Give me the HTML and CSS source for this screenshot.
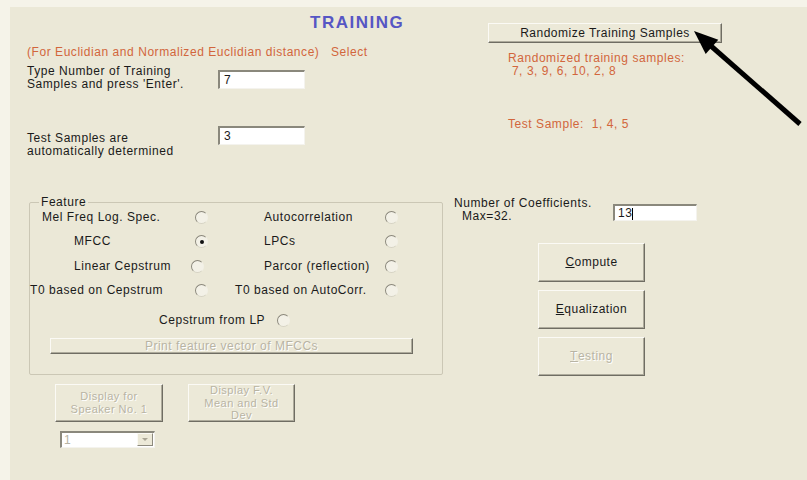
FILE: index.html
```html
<!DOCTYPE html>
<html>
<head>
<meta charset="utf-8">
<title>Training</title>
<link rel="stylesheet" href="styles.css">
</head>
<body>
<div class="dialog">
  <div class="head">
    <div class="intro">
      <h1 class="title">TRAINING</h1>
      <p class="note">(For Euclidian and Normalized Euclidian distance)&nbsp;&nbsp; Select</p>
      <div class="field field-train">
        <label class="field-label">Type Number of Training<br>Samples and press 'Enter'.</label>
        <div class="textbox textbox-train">7</div>
      </div>
      <div class="field field-test">
        <label class="field-label field-label-test">Test Samples are<br>automatically determined</label>
        <div class="textbox">3</div>
      </div>
    </div>
    <div class="randomize">
      <button class="btn btn-random">Randomize Training Samples</button>
      <p class="result">Randomized training samples:<br>&nbsp;7, 3, 9, 6, 10, 2, 8</p>
      <p class="result result-test">Test Sample:&nbsp; 1, 4, 5</p>
    </div>
  </div>

  <div class="main">
    <div class="left">
      <fieldset class="feature">
        <legend>Feature</legend>
        <div class="options">
          <span class="opt opt-mel">Mel Freq Log. Spec.</span><span class="radio"></span><span></span><span class="opt opt-r">Autocorrelation</span><span class="radio"></span>
          <span class="opt opt-in">MFCC</span><span class="radio radio-on"></span><span></span><span class="opt opt-r">LPCs</span><span class="radio"></span>
          <span class="opt opt-in">Linear Cepstrum</span><span class="radio radio-shift"></span><span></span><span class="opt opt-r">Parcor (reflection)</span><span class="radio"></span>
          <span class="opt">T0 based on Cepstrum</span><span class="radio"></span><span></span><span class="opt">T0 based on AutoCorr.</span><span class="radio"></span>
        </div>
        <div class="lp-row"><span>Cepstrum from LP</span><span class="radio"></span></div>
        <button class="btn btn-print" disabled>Print feature vector of MFCCs</button>
      </fieldset>
      <div class="display-row">
        <button class="btn btn-display" disabled>Display for<br>Speaker No. 1</button>
        <button class="btn btn-display btn-stats" disabled>Display F.V.<br>Mean and Std<br>Dev</button>
      </div>
      <div class="combo"><span class="combo-value">1</span><span class="combo-arrow"></span></div>
    </div>

    <div class="right">
      <div class="coef">
        <label class="coef-label">Number of Coefficients.<br><span class="coef-max">Max=32.</span></label>
        <div class="textbox textbox-coef">13<span class="caret"></span></div>
      </div>
      <div class="actions">
        <button class="btn btn-action"><u>C</u>ompute</button>
        <button class="btn btn-action"><u>E</u>qualization</button>
        <button class="btn btn-action" disabled><u>T</u>esting</button>
      </div>
    </div>
  </div>
</div>

<svg class="pointer" width="807" height="480" viewBox="0 0 807 480">
  <line x1="800" y1="124" x2="711" y2="46" stroke="#000" stroke-width="5"/>
  <polygon points="694,31 705.7,53.9 718.3,39.7" fill="#000"/>
</svg>
</body>
</html>
```

FILE: styles.css
```css
* { box-sizing: border-box; }

html, body {
  margin: 0;
  width: 807px;
  height: 480px;
  overflow: hidden;
}

body {
  position: relative;
  padding: 7px 0 0 10px;
  background: #f5f3e9;
  font-family: "Liberation Sans", Arial, sans-serif;
  font-size: 12px;
  line-height: 13px;
  letter-spacing: 0.55px;
  color: #1a1a1a;
}

.dialog {
  height: 473px;
  background: #ebe8d7;
  display: flex;
  flex-direction: column;
}

p, h1 { margin: 0; }

/* ---------- header area ---------- */
.head {
  display: flex;
  height: 188px;
  flex: none;
}

.intro {
  width: 478px;
  padding-left: 17px;
}

.title {
  margin: 7px 0 0 283px;
  font-size: 17px;
  line-height: 18px;
  font-weight: bold;
  letter-spacing: 1.5px;
  color: #5656c4;
}

.note {
  margin-top: 14px;
  color: #d2663c;
}

.field {
  display: flex;
  align-items: flex-start;
}

.field-train { margin-top: 6px; }
.field-test { margin-top: 35px; }

.field-label { width: 191px; }
.field-label-test { margin-top: 6px; }

.textbox {
  width: 87px;
  height: 19px;
  padding: 2px 0 0 4px;
  background: #fff;
  border-style: solid;
  border-width: 2px 1px 1px 2px;
  border-color: #8a887c #f4f3ee #f4f3ee #8a887c;
}

.textbox-train { margin-top: 5px; }

.randomize {
  display: flex;
  flex-direction: column;
  align-items: flex-start;
}

.result {
  margin: 9px 0 0 20px;
  color: #d2663c;
}

.result-test { margin-top: 40px; }

/* ---------- buttons ---------- */
.btn {
  display: flex;
  align-items: center;
  justify-content: center;
  padding: 0;
  background: #ece9d8;
  border: 1px solid;
  border-color: #fbfaf5 #6f6d63 #6f6d63 #fbfaf5;
  box-shadow: inset -1px -1px 0 #aeab9c;
  font-family: inherit;
  font-size: 12px;
  line-height: 13px;
  letter-spacing: 0.5px;
  color: #1a1a1a;
  text-align: center;
}

.btn:disabled {
  color: #b8b4a4;
  text-shadow: 1px 1px 0 #fff;
}

.btn-random {
  margin-top: 16px;
  width: 234px;
  height: 20px;
}

/* ---------- feature group ---------- */
.main {
  display: flex;
}

.left {
  margin-left: 19px;
  width: 414px;
}

.feature {
  margin: 1px 0 0;
  padding: 0 0 20px;
  width: 414px;
  min-width: 0;
  border: 1px solid #cbc7b5;
  border-radius: 2px;
}

.feature legend {
  margin-left: 9px;
  padding: 0 2px;
  line-height: 13px;
}

.options {
  margin-top: -4px;
  display: grid;
  grid-template-columns: 165px 14px 26px 150px 14px;
  grid-auto-rows: 24.5px;
  align-items: center;
}

.opt { white-space: nowrap; }
.opt-mel { padding-left: 12px; }
.opt-in { padding-left: 44px; }
.opt-r { padding-left: 29px; }

.radio {
  display: inline-block;
  position: relative;
  width: 13px;
  height: 13px;
  border-radius: 50%;
  border: 1px solid;
  border-color: #8a877b #f2f0e6 #d6d3c4 #8a877b;
  background: #f3f1e7;
}

.radio-shift { margin-left: -4px; }

.radio-on::after {
  content: "";
  position: absolute;
  left: 3.5px;
  top: 3.5px;
  width: 4px;
  height: 4px;
  border-radius: 50%;
  background: #111;
}

.lp-row {
  display: flex;
  align-items: center;
  gap: 12px;
  height: 16px;
  margin: 9px 0 0 129px;
}

.btn-print {
  margin: 10px 0 0 20px;
  width: 363px;
  height: 16px;
}

.display-row {
  display: flex;
  gap: 25px;
  margin: 9px 0 0 26px;
}

.btn-display {
  width: 108px;
  height: 38px;
  font-size: 11px;
  line-height: 12.6px;
}

.btn-stats { width: 107px; }

.combo {
  display: flex;
  justify-content: space-between;
  margin: 9px 0 0 31px;
  width: 95px;
  height: 17px;
  background: #fff;
  border-style: solid;
  border-width: 2px 1px 1px 2px;
  border-color: #8a887c #f4f3ee #f4f3ee #8a887c;
}

.combo-value {
  padding: 1px 0 0 2px;
  color: #b8b4a4;
}

.combo-arrow {
  position: relative;
  width: 16px;
  height: 13px;
  margin: 0 1px 0 0;
  background: #ece9d8;
  border: 1px solid;
  border-color: #fbfaf5 #8d8a7e #8d8a7e #fbfaf5;
}

.combo-arrow::after {
  content: "";
  position: absolute;
  left: 4px;
  top: 4px;
  border-left: 3px solid transparent;
  border-right: 3px solid transparent;
  border-top: 3px solid #a9a595;
}

/* ---------- right column ---------- */
.right {
  margin-left: 11px;
}

.coef {
  display: flex;
  align-items: flex-start;
  margin-top: 2px;
}

.coef-label { width: 159px; }
.coef-max { padding-left: 8px; }

.textbox-coef {
  margin-top: 7px;
  width: 84px;
  height: 17px;
  padding-top: 1px;
  padding-left: 3px;
  display: flex;
  align-items: center;
}

.caret {
  display: inline-block;
  width: 1px;
  height: 12px;
  background: #000;
}

.actions {
  display: flex;
  flex-direction: column;
  gap: 8px;
  margin: 20px 0 0 84px;
}

.btn-action {
  width: 107px;
  height: 39px;
}

/* ---------- annotation arrow ---------- */
.pointer {
  position: absolute;
  left: 0;
  top: 0;
  pointer-events: none;
}
```
